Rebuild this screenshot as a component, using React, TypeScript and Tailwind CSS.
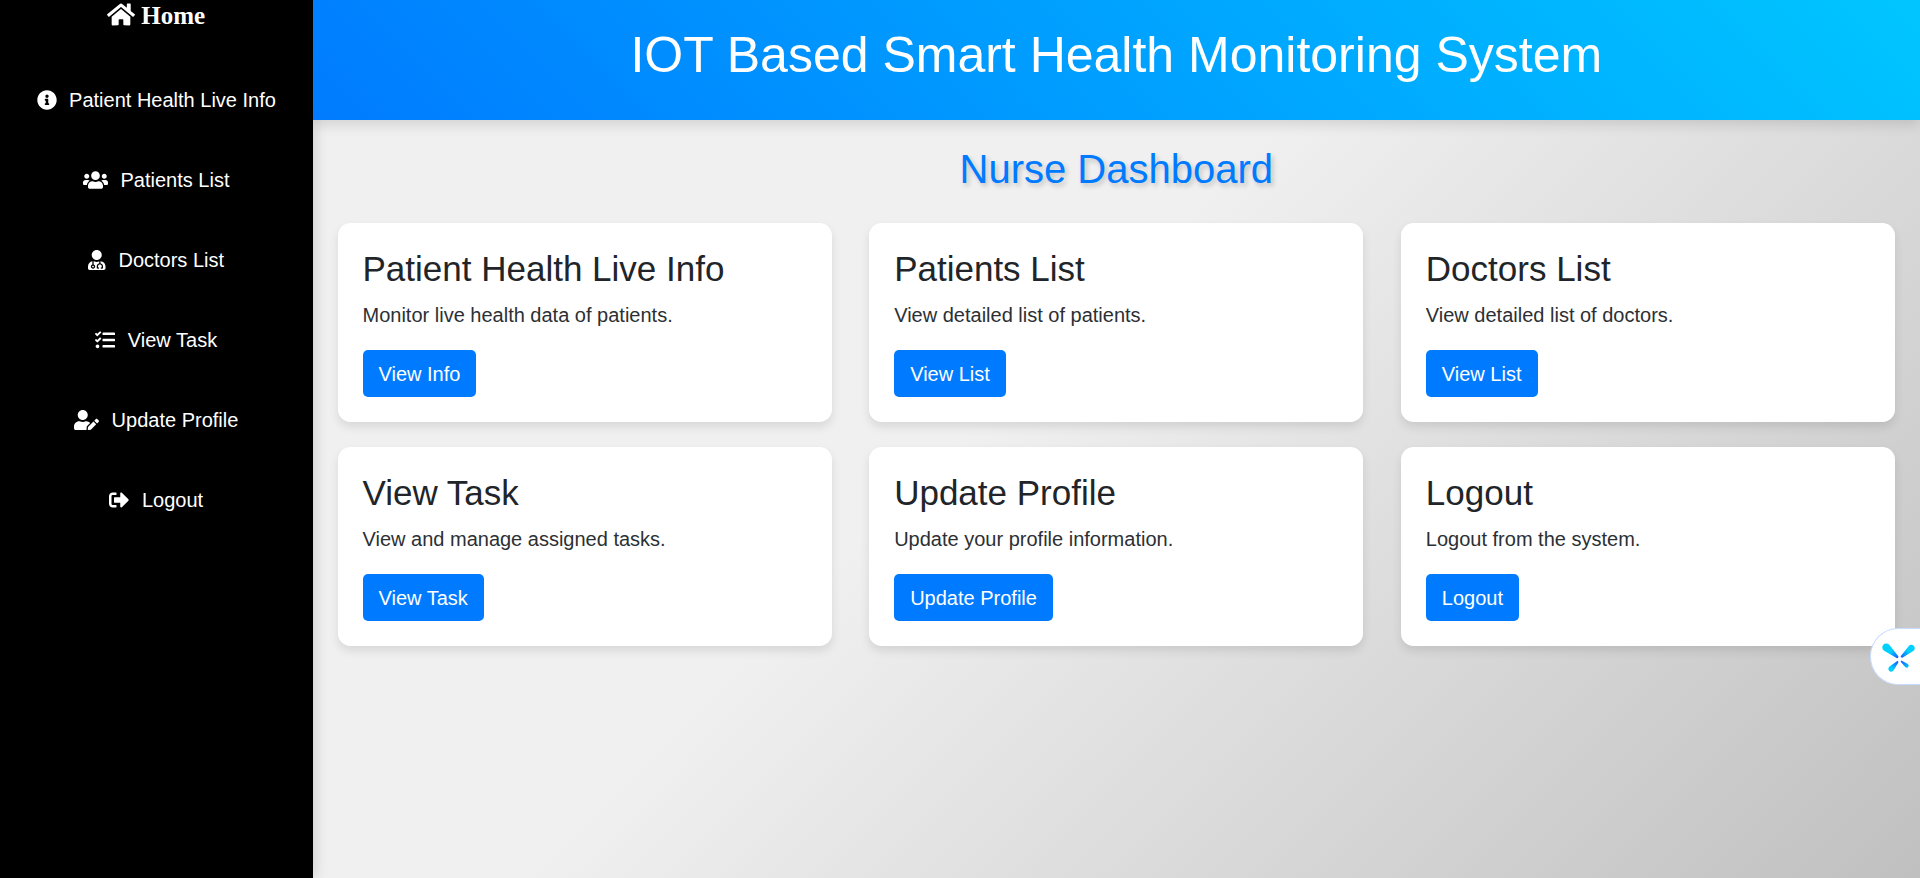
import React from "react";
import { FaHome, FaInfoCircle, FaUsers, FaUserMd, FaTasks, FaUserEdit, FaSignOutAlt } from "react-icons/fa";
import type { IconType } from "react-icons";

const links: { label: string; Icon: IconType; size: string }[] = [
  { label: "Patient Health Live Info", Icon: FaInfoCircle, size: "w-[20px]" },
  { label: "Patients List", Icon: FaUsers, size: "w-[25px]" },
  { label: "Doctors List", Icon: FaUserMd, size: "w-[17.5px]" },
  { label: "View Task", Icon: FaTasks, size: "w-[20px]" },
  { label: "Update Profile", Icon: FaUserEdit, size: "w-[25px]" },
  { label: "Logout", Icon: FaSignOutAlt, size: "w-[20px]" },
];

const cards = [
  { title: "Patient Health Live Info", text: "Monitor live health data of patients.", action: "View Info" },
  { title: "Patients List", text: "View detailed list of patients.", action: "View List" },
  { title: "Doctors List", text: "View detailed list of doctors.", action: "View List" },
  { title: "View Task", text: "View and manage assigned tasks.", action: "View Task" },
  { title: "Update Profile", text: "Update your profile information.", action: "Update Profile" },
  { title: "Logout", text: "Logout from the system.", action: "Logout" },
];

function Sidebar() {
  return (
    <nav className="z-10 flex w-[312.5px] shrink-0 flex-col items-center bg-black text-white shadow-[2.5px_0_12px_rgba(0,0,0,0.12)]">
      <a className="flex h-[30px] items-center gap-[6px] font-['Liberation_Serif',serif] text-[25px] font-bold">
        <FaHome className="mb-[1px] h-[25px] w-[28px]" />
        <span className="pt-[1px]">Home</span>
      </a>
      <ul className="mt-[30px] flex flex-col items-center">
        {links.map(({ label, Icon, size }) => (
          <li key={label} className="flex h-20 items-center gap-[12.5px] text-[20px] leading-[30px]">
            <Icon className={`h-[20px] ${size}`} />
            {label}
          </li>
        ))}
      </ul>
    </nav>
  );
}

function Card({ title, text, action }: { title: string; text: string; action: string }) {
  return (
    <section className="h-[199px] rounded-[12.5px] bg-white p-[25px] text-[#212529] shadow-[0_5px_10px_rgba(0,0,0,0.1)]">
      <h3 className="mb-[10px] text-[35px] leading-[42px]">{title}</h3>
      <p className="mb-[20px] text-[20px] leading-[30px] text-[#2c3034]">{text}</p>
      <button className="flex h-[47px] items-center rounded-[5px] bg-[#007bff] px-[16px] text-[20px] leading-[30px] text-white">
        {action}
      </button>
    </section>
  );
}

function AssistantTab() {
  return (
    <div className="fixed right-0 top-[628px] z-20 flex h-[57px] w-[50px] items-center rounded-l-[28px] border border-r-0 border-[#c8dcff] bg-white pl-[11px]">
      <svg width="34" height="30" viewBox="0 0 34 30" className="shrink-0">
        <defs>
          <radialGradient id="wing" gradientUnits="userSpaceOnUse" cx="17.5" cy="17.5" r="17">
            <stop offset="0.1" stopColor="#1a50ff" />
            <stop offset="0.4" stopColor="#0a90ff" />
            <stop offset="0.7" stopColor="#00d0ff" />
          </radialGradient>
        </defs>
        <g fill="url(#wing)">
          <path d="M7.3 2.8A4 4 0 1 0 2.1 8.8L14.1 15.8A1.3 1.3 0 0 0 15.9 13.8Z" />
          <path d="M26.8 3.95A3.4 3.4 0 1 1 31.2 9.05L20.8 15.4A1.2 1.2 0 0 1 19.2 13.6Z" />
          <path d="M7.5 24.6A2.8 2.8 0 1 0 11.5 28.4L16.2 20.7A1 1 0 0 0 14.8 19.3Z" />
          <path d="M25.8 22A2 2 0 1 1 23.2 25L19.1 20.3A0.9 0.9 0 0 1 20.3 18.9Z" />
        </g>
      </svg>
    </div>
  );
}

export default function App() {
  return (
    <div className="flex h-[878px] w-full overflow-hidden bg-[linear-gradient(135deg,#f0f0f0_50%,#c0c0c0_100%)] font-['Liberation_Sans',Arial,sans-serif]">
      <Sidebar />
      <div className="flex min-w-0 flex-1 flex-col">
        <header className="z-20 flex h-[120px] shrink-0 items-center justify-center bg-[linear-gradient(45deg,#007bff,#00c6ff)] pb-[10px] shadow-[0_5px_12px_rgba(0,0,0,0.12)]">
          <h1 className="text-[50px] leading-[60px] text-white">IOT Based Smart Health Monitoring System</h1>
        </header>
        <main className="px-[25px] pt-[25px]">
          <h2 className="mb-[30px] text-center text-[40px] leading-[48px] text-[#007bff] [text-shadow:2.5px_2.5px_5px_rgba(0,0,0,0.2)]">
            Nurse Dashboard
          </h2>
          <div className="grid grid-cols-3 gap-x-[37.5px] gap-y-[25px]">
            {cards.map((card) => (
              <Card key={card.title} {...card} />
            ))}
          </div>
        </main>
      </div>
      <AssistantTab />
    </div>
  );
}
